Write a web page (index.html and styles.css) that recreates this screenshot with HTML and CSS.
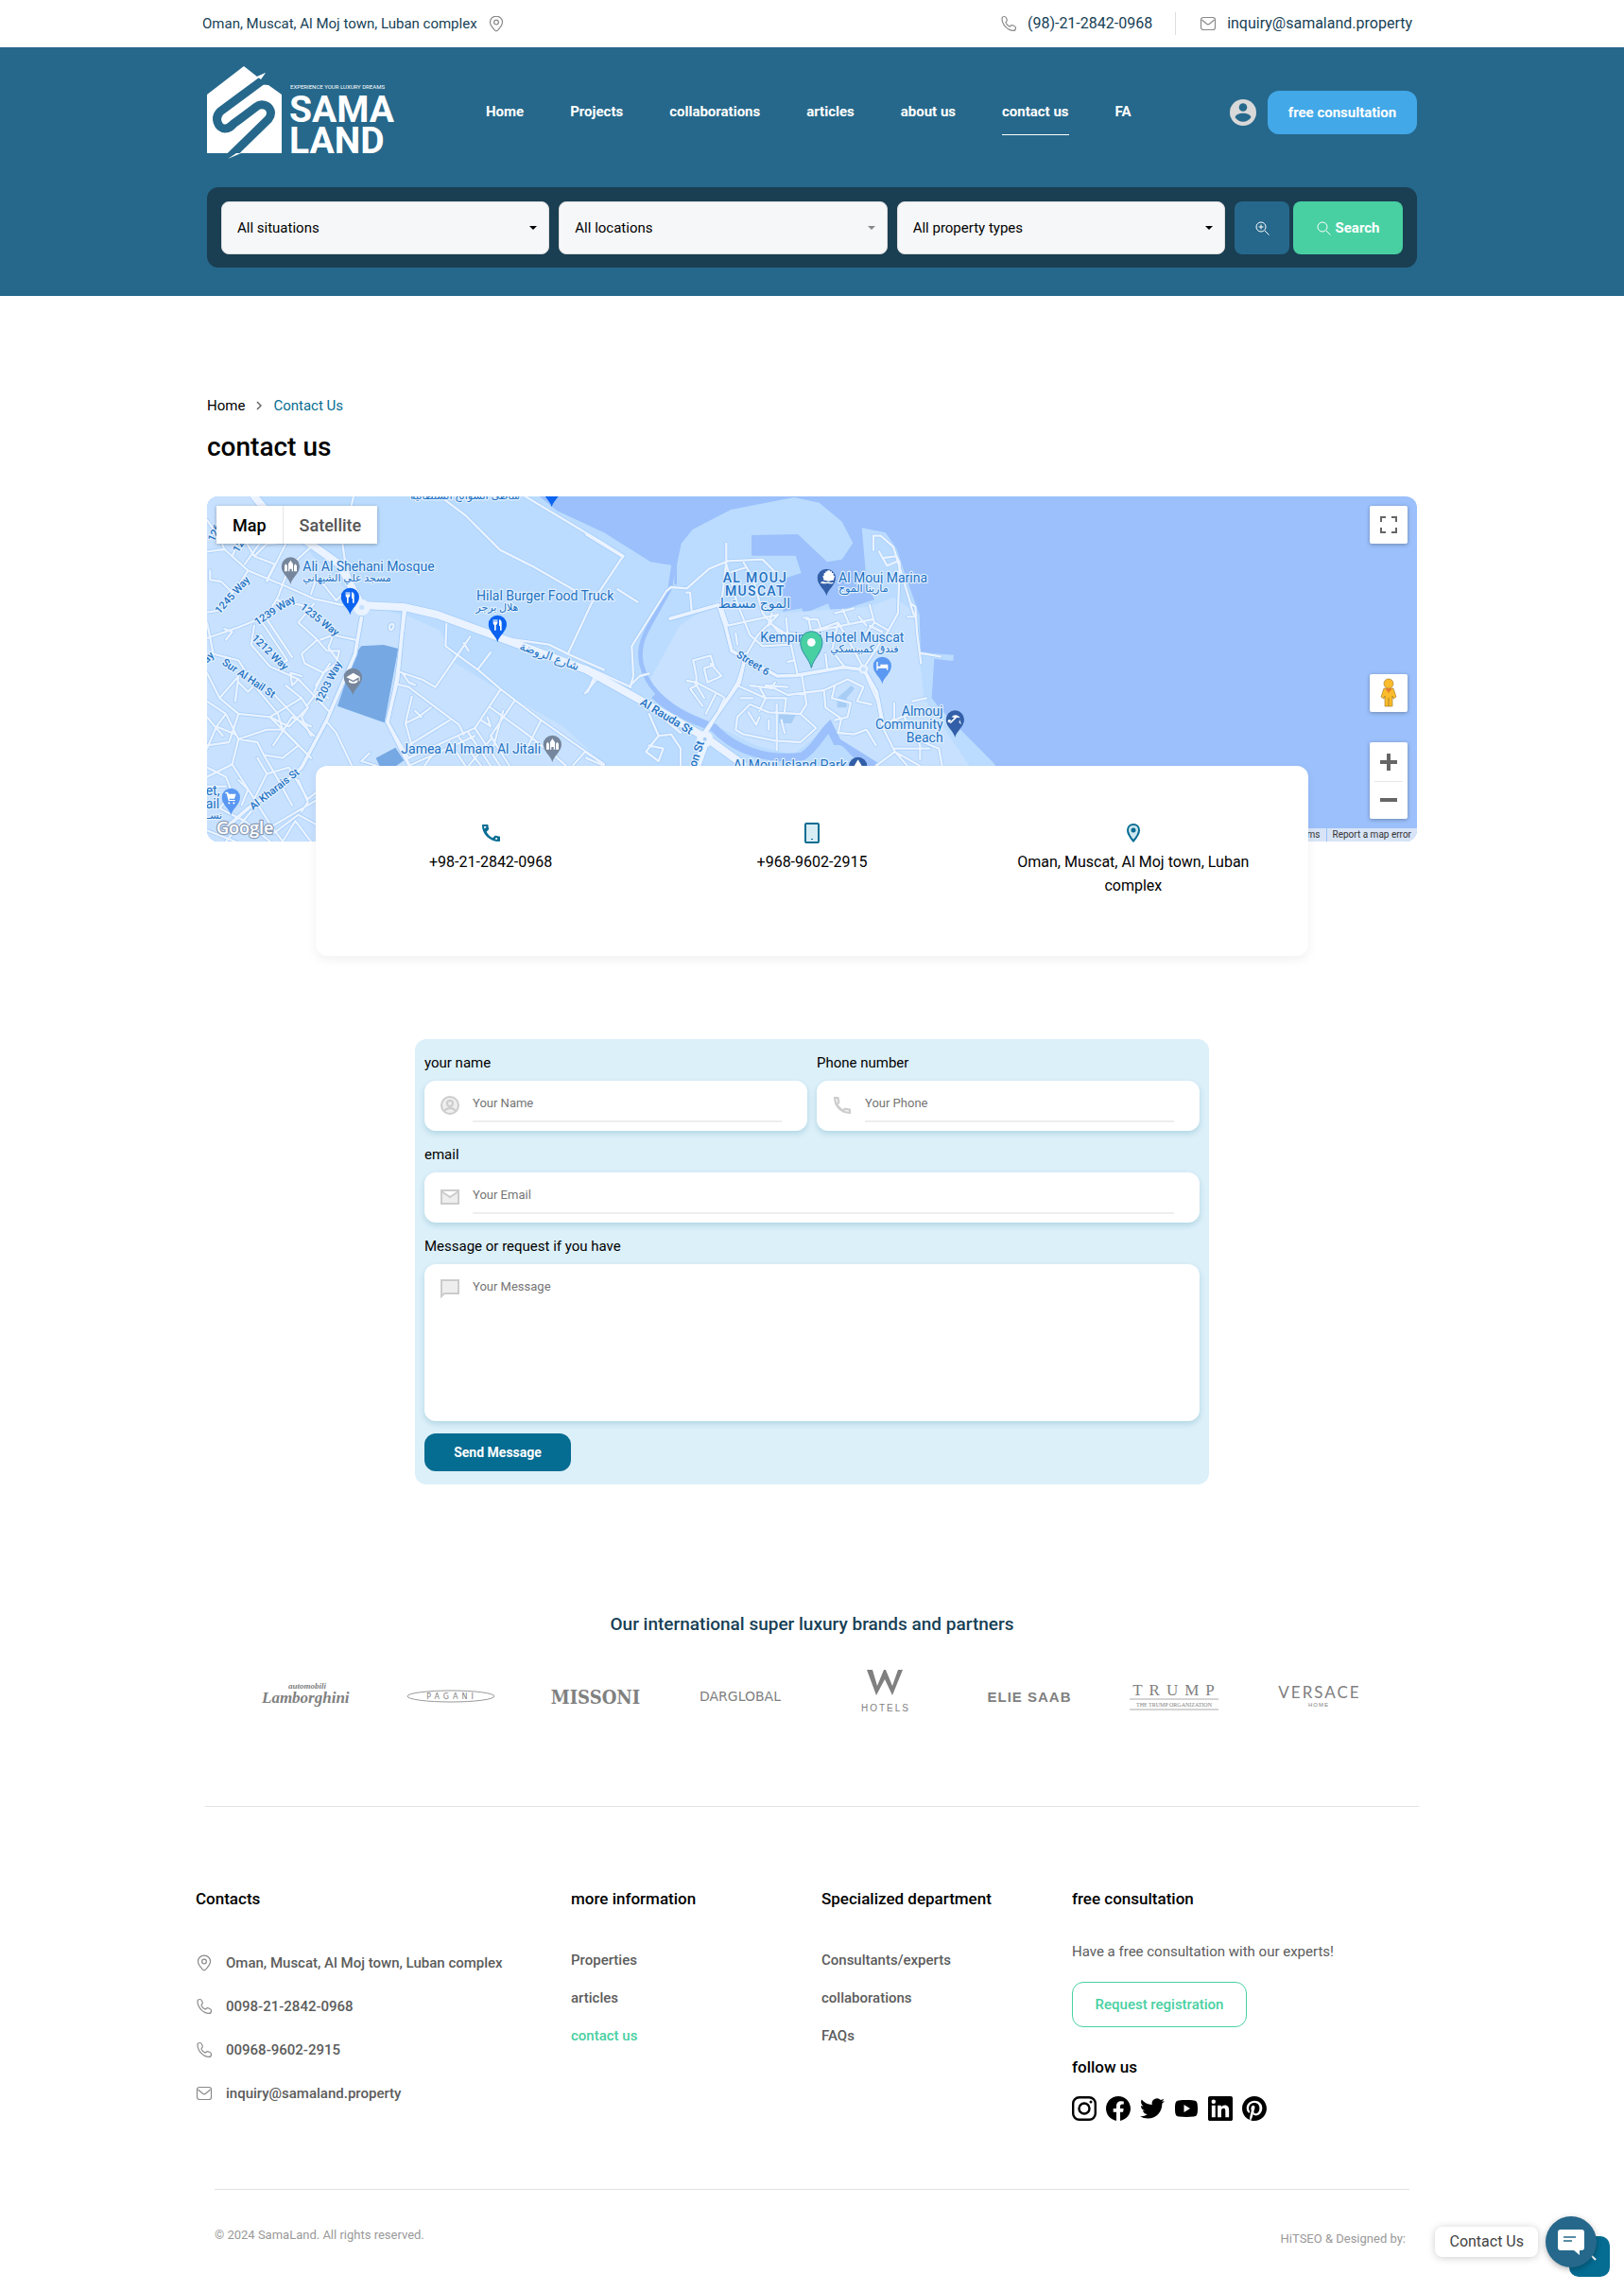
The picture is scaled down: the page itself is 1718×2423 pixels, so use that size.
FILE: index.html
```html
<!DOCTYPE html>
<html lang="en">
<head>
    <meta charset="UTF-8">
    <meta name="viewport" content="width=device-width, initial-scale=1.0">
    <title>Contact Us - SamaLand</title>
    <link rel="stylesheet" href="styles.css">
</head>
<body>
    <!-- shared icons -->
    <svg class="sprite" aria-hidden="true">
        <symbol id="i-pin" viewBox="0 0 18 18"><path d="M9 1.2c-3.800 0-6.500 2.800-6.500 6.300 0 3.800 3.600 6.800 5.200 8.700.7.800 1.900.8 2.600 0 1.600-1.900 5.200-4.900 5.200-8.700C15.500 4 12.800 1.200 9 1.200z"/><circle cx="9" cy="7.600" r="2.400"/></symbol>
        <symbol id="i-phone" viewBox="0 0 18 18"><path d="M2 3.500C2 2.300 3.300 1.500 4.600 1.500c1 0 1.500.6 1.900 1.600l.7 1.700c.3.900 0 1.600-.7 2.200-.6.500-.6.900-.3 1.500.8 1.400 1.900 2.500 3.300 3.300.6.300 1 .3 1.500-.3.600-.7 1.300-1 2.200-.7l1.700.7c1 .4 1.600.9 1.600 1.900 0 1.500-1 3-2.400 3C8 16.400 2 10 2 3.500z"/></symbol>
        <symbol id="i-mail" viewBox="0 0 18 18"><rect x="1.500" y="2.500" width="15" height="13" rx="2.500"/><path d="M2.500 5l5 4.300c.9.700 2.100.7 3 0l5-4.300"/></symbol>
        <symbol id="m-pin" viewBox="-30 -88 60 90"><path d="M0 0C-4-20-29-34-29-57A29 29 0 1 1 29-57C29-34 4-20 0 0z"/></symbol>
    </svg>

    <div class="topbar">
        <div class="topbar-inner">
            <div class="topbar-item">Oman, Muscat, Al Moj town, Luban complex <svg class="line-icon"><use href="#i-pin"/></svg></div>
            <div class="topbar-right">
                <a class="topbar-item" href="tel:+982128420968"><svg class="line-icon"><use href="#i-phone"/></svg> (98)-21-2842-0968</a>
                <a class="topbar-item with-line" href="mailto:inquiry@samaland.property"><svg class="line-icon"><use href="#i-mail"/></svg> inquiry@samaland.property</a>
            </div>
        </div>
    </div>

    <header class="header">
        <div class="container">
            <div class="navbar">
                <a class="logo" href="#" aria-label="Sama Land">
                    <svg width="202" height="98" viewBox="0 0 202 98">
                        <path fill="#fff" d="M0 30L39 0l14 11 9-4-9 12 12 1 14 10v62H33l-11 6 4-6H0z"/>
                        <path fill="none" stroke="#26688b" stroke-width="9" d="M68 8L14 48C7 55 12 66 19 66c4 0 6-2 9-5l24-18c4-3 7-3 11-1 5 3 6 9 2 14L22 98"/>
                        <path fill="#fff" d="M31 92l-9 6 14-6zM53 11l9-4-5 7z"/>
                        <text x="88" y="24" class="logo-tag">EXPERIENCE YOUR LUXURY DREAMS</text>
                        <text x="87" y="59" class="logo-name">SAMA</text>
                        <text x="87" y="92" class="logo-name">LAND</text>
                    </svg>
                </a>
                <nav class="menu">
                    <a href="#">Home</a>
                    <a href="#">Projects</a>
                    <a href="#">collaborations</a>
                    <a href="#">articles</a>
                    <a href="#">about us</a>
                    <a href="#" class="active">contact us</a>
                    <a href="#">FA</a>
                </nav>
                <div class="nav-actions">
                    <a href="#" aria-label="Account">
                        <svg width="28" height="28" viewBox="0 0 28 28"><circle cx="14" cy="14" r="14" fill="#d9d9d9"/><circle cx="14" cy="8.500" r="4.300" fill="#26688b"/><path d="M5.500 19c1-3 5-4.300 8.500-4.300s7.500 1.300 8.500 4.300c-2 3-5 4.800-8.500 4.800S7.500 22 5.500 19z" fill="#26688b"/></svg>
                    </a>
                    <button class="btn-consult" type="button">free consultation</button>
                </div>
            </div>

            <form class="search">
                <div class="select"><select aria-label="Situation"><option>All situations</option></select></div>
                <div class="select muted"><select aria-label="Location"><option>All locations</option></select></div>
                <div class="select"><select aria-label="Property type"><option>All property types</option></select></div>
                <div class="search-buttons">
                    <button class="btn-zoom" type="button" aria-label="Advanced search">
                        <svg width="15" height="15" viewBox="0 0 15 15" fill="none" stroke="#fff"><circle cx="6" cy="6" r="5"/><path d="M10 10l4.500 4.500M3.500 6h5M6 3.500v5"/></svg>
                    </button>
                    <button class="btn-search" type="submit">
                        <svg width="15" height="15" viewBox="0 0 15 15" fill="none" stroke="#fff"><circle cx="6" cy="6" r="5"/><path d="M10 10l4.500 4.500"/></svg>
                        Search
                    </button>
                </div>
            </form>
        </div>
    </header>

    <main class="container">
        <div class="breadcrumb">
            <a href="#">Home</a>
            <svg width="6" height="10" viewBox="0 0 6 10" fill="none" stroke="#666" stroke-width="1.500"><path d="M1 1l4 4-4 4"/></svg>
            <a href="#" class="current">Contact Us</a>
        </div>
        <h1>contact us</h1>

        <div class="map">
            <svg class="map-canvas" viewBox="0 0 3840 1095" preserveAspectRatio="xMidYMid slice">
                <defs>
                    <g id="minor">
                        <!-- west blocks -->
                        <path d="M0 175L55 168L130 235L250 285L340 325L430 345M130 235L95 290L60 330L50 360L0 368M0 450L100 415L150 395L185 385L225 320L260 225L330 160"/>
                        <path d="M10 235V265L45 270L80 305M60 60L110 120L150 190L215 215M110 120L80 190M150 190L190 150L265 145M190 270L250 150M0 75L40 130L55 168M120 215L180 130M215 215L190 265"/>
                        <path d="M0 400L20 500L100 520L150 600L225 690L240 740L330 830M150 410L140 470L200 540L290 580L385 680M55 420L80 430L60 455M175 400L255 520L230 530L170 440M190 390L270 510"/>
                        <path d="M225 330L300 345L370 400L400 440L470 455M290 400L340 340M290 400L350 455L300 500L310 530L370 560L340 620M350 455L380 490L420 490L410 530L370 560M360 455L400 440M400 440L385 480L430 540M330 310L350 250M370 280L410 330L430 310"/>
                        <path d="M0 560L40 640L100 690L200 700L300 640L320 670L260 730L200 700M0 650L60 690L30 730L0 800M60 690L100 770L80 850L0 890M100 770L190 740L240 740L290 790L240 830L180 820L160 780L100 770M30 730L90 755M40 640L100 570L90 650M0 700L50 760"/>
                        <path d="M200 615L300 720L340 760M300 640L250 600M240 740L200 700M160 830L190 880L150 960M80 850L150 960L200 1040L240 1095M190 880L260 860L320 960L345 940M100 690L70 780L0 790M210 790L270 700L330 730M180 820L215 880L270 980"/>
                        <path d="M0 860L60 890L80 940L40 990L120 1030L200 1095M0 920L60 920M100 900L130 930L110 980M200 1050L345 965M210 1070L290 1010L345 1040M240 1095L280 1030L330 1095M0 1060L90 1095M60 1095L140 1000M300 1000L320 970L290 900"/>
                        <path d="M290 580L270 600L265 560L300 570M345 600L390 530M320 670L300 700L330 760M385 640L350 620L320 660M100 590L130 620L150 600"/>
                        <!-- centre -->
                        <path d="M430 150L440 220L475 310M465 0L430 150M585 405C575 410 578 425 586 424C595 415 595 402 585 405M630 365L600 580L575 720L640 830M760 405L757 475L860 550L930 610L1060 710L1260 850"/>
                        <path d="M835 445L790 510L725 605L680 580L605 555M815 465L830 490M900 495L860 548M600 595L640 605L800 725L815 755M650 635L630 720L650 790M630 720L670 700L710 670M660 680L680 700M620 560L640 590L660 598"/>
                        <path d="M640 790L770 710M640 830L850 735L930 615M690 855L740 785M770 780L820 855M800 765L870 855M830 750L900 855M850 735L930 855M900 670L1010 750L1100 820L1140 855M975 650L900 760L960 855M1060 710L1020 790M905 765L830 855M870 710L900 730L890 700M940 680L910 790M640 855L850 760"/>
                        <path d="M380 715L410 750L460 855M540 855L490 840L515 815M740 0L820 60L930 170L1030 220L1170 300L1130 330M1010 0L1260 150L1320 190L1220 340L1145 500M1240 575L1200 625M945 450L1085 470L1145 500L1260 550"/>
                        <path d="M1203 540L1345 605M1203 830L1260 855M1260 850L1200 810L1160 855M1303 295L1367 335"/>
                        <!-- marina -->
                        <g transform="translate(1203 0)">
                            <path d="M140 605L150 570L145 475L255 300L270 288L320 292L390 230L450 205L560 200L600 240M445 150V205L430 340M318 305H330L335 360M430 350L450 410L610 375L545 440L510 500L480 590L385 745M480 470L475 435M445 215L480 340L520 440L560 475L650 470L670 560"/>
                            <path d="M500 210L530 260L560 370L610 430L690 440M580 400L640 440L635 385M590 370L580 410M460 240L510 225M690 385H705L715 430L800 400L780 490L820 540M700 430L745 420L735 390L700 390M715 430L910 390M790 370L850 355M815 360L835 405M865 380L890 410M900 345L915 400L960 425L990 370L995 210L985 190M915 400L870 460M760 500L765 545M640 525L660 520M800 400L840 470L880 545"/>
                            <path d="M912 170V125H935L975 160L1030 340L1045 350L1050 430L1063 530M930 175L955 220L990 205M945 195L980 190M1020 382H1045M1065 498L1125 508M960 425L910 500L880 545M940 430L900 410M1030 345L1040 375"/>
                            <path d="M880 550L925 650L940 730L980 810L1060 855M980 810L920 855M980 810L1020 855M940 730L1000 700L1070 680M978 655V705L950 725M1035 650L1080 640M1010 700L1060 790L1060 835M1070 780L1120 800L1130 855M980 800L1090 800"/>
                            <path d="M685 570L700 660L680 690L730 735L680 780L600 775L500 755L475 740L480 700L520 660L580 685L680 690M520 600L600 610L640 630L755 615L830 580L880 605L860 650L905 660M550 605L570 640L550 680M480 600L570 640L635 640L630 685M755 615L760 670L810 705L800 750L850 755L890 740L920 790M605 660V805M570 600L640 605M600 590L585 610M840 655L830 700L790 710M515 685L540 725L550 700M620 710L630 750M580 710V740M840 655L780 640L790 600M490 640L530 640"/>
                            <path d="M320 585L350 590L435 635M340 520L395 505L405 535L375 545L385 590L430 570L395 530M340 520L350 570L350 600L330 610L370 665M410 630L380 690M440 640L420 680M345 590L375 640M200 690L230 760L270 755L300 800L300 855M230 760L190 810L230 840L245 800L200 790M240 700L300 750M140 600L170 570L200 562M25 575L5 620"/>
                        </g>
                    </g>
                    <g id="mid">
                        <path d="M490 385L470 500L380 710L300 860L240 915L130 990L50 1060M625 365L605 580L572 715L640 850"/>
                        <path d="M1623 345L1645 410L1665 490L1810 570L1870 568L2020 542L2085 550L2125 620L2145 720M1710 500L1690 590L1578 750M1205 120L1320 190M1470 388L1620 345"/>
                    </g>
                    <g id="major"><path d="M150 0L200 60L420 215L490 345L630 352L730 375L920 445L1203 550L1470 700L1590 770L1700 850M1585 770L1555 855"/></g>
                </defs>
                <rect width="3840" height="1095" fill="#9bc0fb"/>
                <path fill="#bbdcff" d="M0 0H1055L1110 45L1260 115L1408 208L1483 220V280H1491V218L1505 150L1541 105L1663 42L1863 3L1943 20L2015 80L2050 148L2015 200L1968 208L1875 120L1728 123V188H1868L1886 243L1828 262V365L1888 355L1893 372L1971 340L1983 370L2118 328L2093 270L2078 100L2153 115L2188 165L2223 270L2261 375L2265 495L2370 503L2368 522L2308 515L2300 640L2323 670L2500 850L2560 1095H0z"/>
                <path fill="#c7e1ff" d="M0 0H150L490 345L640 380L740 425L790 530L920 610L1130 730L1260 850V1095H0zM1500 410L1620 330L1750 340L1830 370L2100 350L2180 320L2250 370L2265 540L2275 640L2420 855H2120L1960 740L1860 820L1740 790L1440 640L1400 590z"/>
                <path class="water" stroke-width="14" d="M1481 215L1470 290L1440 345C1400 420 1365 460 1378 530C1395 600 1440 650 1550 710"/>
                <path class="water" stroke-width="26" d="M1420 630C1450 660 1500 690 1560 715L1610 735C1670 800 1770 840 1890 825C1930 800 1945 760 1975 730L2000 780L2120 855"/>
                <path fill="#bbdcff" d="M1940 855C1950 800 1990 775 2020 795L2075 855z"/>
                <path fill="#76a8e3" d="M490 475L560 471L607 483L563 718L414 665L470 500zM536 830L598 797L625 838L600 855H548z"/>
                <path fill="#a8cdf5" d="M2000 640L2045 600L2055 610L2030 640V670H2000zM1815 690H1870L1855 720H1815z"/>
                <use href="#minor" class="road-case minor"/>
                <use href="#mid" class="road-case mid"/>
                <use href="#major" class="road-case major"/>
                <use href="#minor" class="road minor"/>
                <use href="#mid" class="road mid"/>
                <use href="#major" class="road major"/>
                <circle cx="491" cy="352" r="26" fill="#eaf3ff"/><circle cx="491" cy="352" r="8" fill="#c7e1ff"/>
                <circle cx="1580" cy="770" r="26" fill="#eaf3ff"/><circle cx="1580" cy="770" r="6" fill="#a8cdf5"/>
                <circle cx="2083" cy="548" r="11" fill="#c7e1ff" stroke="#eaf3ff" stroke-width="7"/>

                <g class="street">
                    <text transform="translate(40 374) rotate(-48)">1245 Way</text>
                    <text transform="translate(160 410) rotate(-33)">1239 Way</text>
                    <text transform="translate(294 355) rotate(38)">1235 Way</text>
                    <text transform="translate(140 452) rotate(44)">1212 Way</text>
                    <text transform="translate(362 660) rotate(-63)">1203 Way</text>
                    <text transform="translate(46 532) rotate(34)">Sur Al Hail St</text>
                    <text transform="translate(146 996) rotate(-38)">Al Kharais St</text>
                    <text transform="translate(22 145) rotate(-65)">126</text>
                    <text transform="translate(100 180) rotate(-60)">12</text>
                    <text transform="translate(0 530) rotate(-45)">ay</text>
                    <text transform="translate(1678 508) rotate(32)">Street 6</text>
                    <text class="big" transform="translate(1372 660) rotate(31)">Al Rauda St</text>
                    <text class="big" transform="translate(1552 860) rotate(-72)">on St</text>
                    <text class="big" transform="translate(990 485) rotate(20)">شارع الروضة</text>
                </g>
                <g class="place">
                    <text x="304" y="237">Ali Al Shehani Mosque</text>
                    <text x="304" y="269" class="ar">مسجد علي الشيهاني</text>
                    <text x="855" y="331">Hilal Burger Food Truck</text>
                    <text x="853" y="364" class="ar">هلال برجر</text>
                    <text x="645" y="8" class="ar">شاطئ السوالح السلطانية</text>
                    <text x="616" y="816">Jamea Al Imam Al Jitali</text>
                    <text x="-4" y="948">et,</text>
                    <text x="-4" y="990">ail</text>
                    <text x="0" y="1022" class="ar">نسـ</text>
                    <text x="2004" y="273">Al Mouj Marina</text>
                    <text x="2004" y="304" class="ar">مارينا الموج</text>
                    <text x="1756" y="462">Kempinski Hotel Muscat</text>
                    <text x="1978" y="495" class="ar">فندق كمبينسكي</text>
                    <text x="2336" y="697" text-anchor="end">Almouj</text>
                    <text x="2336" y="739" text-anchor="end">Community</text>
                    <text x="2336" y="781" text-anchor="end">Beach</text>
                    <text x="1670" y="868">Al Mouj Island Park</text>
                    <g class="district" text-anchor="middle">
                        <text x="1740" y="273" class="tracked">AL MOUJ</text>
                        <text x="1740" y="315" class="tracked">MUSCAT</text>
                        <text x="1737" y="355">الموج مسقط</text>
                    </g>
                </g>

                <g fill="#76869c">
                    <use href="#m-pin" x="235" y="191" width="60" height="90"/>
                    <use href="#m-pin" x="433" y="543" width="60" height="90"/>
                    <use href="#m-pin" x="1066" y="756" width="60" height="90"/>
                </g>
                <g fill="#0b63f0">
                    <use href="#m-pin" x="424" y="288" width="60" height="90"/>
                    <use href="#m-pin" x="892" y="375" width="60" height="90"/>
                    <use href="#m-pin" x="1064" y="-54" width="60" height="90"/>
                </g>
                <g fill="#335fa8">
                    <use href="#m-pin" x="1936" y="228" width="60" height="90"/>
                    <use href="#m-pin" x="2344" y="677" width="60" height="90"/>
                    <use href="#m-pin" x="2036" y="825" width="60" height="90"/>
                </g>
                <g fill="#5a98f2">
                    <use href="#m-pin" x="46" y="924" width="60" height="90"/>
                    <use href="#m-pin" x="2113" y="507" width="60" height="90"/>
                </g>
                <g fill="#fff">
                    <path id="mosque" d="M246 238V220l4-6 5 6v18zm12 0v-22c0-6 7-8 7-14 0 6 8 8 8 14v22h-4v-8h-7v8zm18 0V220l4-6 5 6v18z"/>
                    <use href="#mosque" x="831" y="565"/>
                    <path d="M442 574l22-14 21 12v14h-3v-12l-18 10zm8 8l14 7 14-7v7c-8 6-20 6-28 0z"/>
                    <path id="food" d="M440 304h3v8h2v-8h4v8h2v-8h3v10c0 4-3 6-5 7v17h-5v-17c-2-1-4-3-4-7zM459 304c5 0 8 4 8 10v24h-5v-14h-3z"/>
                    <use href="#food" x="468" y="87"/>
                    <path d="M1958 243h5v-5h6v-3h8v3h6v5h5v8l4 2-4 14c-5-3-7 2-15 2s-10-5-15-2l-4-14 4-2zM1948 272c8-5 10 2 18 0s14 4 20 0l2 3c-8 5-12 0-20 1s-12 2-20-1z"/>
                    <path d="M2356 708a5 5 0 1 0 .1 0zM2363 700c8-9 20-8 27 3l-10-2-20 20-4-3 16-16zM2388 708l6 16-7-6z"/>
                    <path d="M58 938h8l3 6h23l-5 15H70l2 4h17v3H68l-6-23h-4zM70 970a3 3 0 1 0 .1 0zM85 970a3 3 0 1 0 .1 0z"/>
                    <path d="M2125 525h4v14h8v-6h24v18h-4v-6h-28v6h-4z"/>
                    <path d="M2066 835l12 20h-24z"/>
                </g>
                <path d="M1918 544C1912 515 1883 495 1883 463A35 35 0 1 1 1953 463C1953 495 1924 515 1918 544z" fill="#48d0a2" stroke="#2f8fa8" stroke-width="3"/>
                <circle cx="1918" cy="463" r="13" fill="#fff"/>
                <text x="30" y="1070" class="google">Google</text>
            </svg>
            <div class="map-type">
                <button type="button" class="on">Map</button>
                <button type="button">Satellite</button>
            </div>
            <button type="button" class="map-btn fullscreen" aria-label="Fullscreen">
                <svg width="18" height="18" viewBox="0 0 18 18" fill="none" stroke="#666" stroke-width="2"><path d="M1 6V1h5M12 1h5v5M17 12v5h-5M6 17H1v-5"/></svg>
            </button>
            <div class="map-tools">
                <button type="button" class="map-btn" aria-label="Street view">
                    <svg width="20" height="32" viewBox="0 0 20 32"><g fill="#fbbc2c" stroke="#9a7422" stroke-width=".6"><path d="M5 11h10l3 9-3 2-1-3v11H6V19l-1 3-3-2z"/><circle cx="10" cy="6" r="5"/></g><path d="M6 11h8l-4 5z" fill="#e57f2e"/><path d="M10 21v9" stroke="#9a7422" stroke-width=".8"/></svg>
                </button>
                <div class="zoom">
                    <button type="button" aria-label="Zoom in"><svg width="18" height="18" viewBox="0 0 18 18" fill="#666"><path d="M7 0h4v7h7v4h-7v7H7v-7H0V7h7z"/></svg></button>
                    <button type="button" aria-label="Zoom out"><svg width="18" height="18" viewBox="0 0 18 18" fill="#666"><path d="M0 7h18v4H0z"/></svg></button>
                </div>
            </div>
            <div class="map-legal"><a href="#">Terms</a><a href="#">Report a map error</a></div>
        </div>

        <div class="contact-card">
            <div class="contact-cell">
                <svg width="24" height="24" viewBox="0 0 24 24"><path fill="#056c92" fill-rule="evenodd" d="M3 4c0-.6.400-1 1-1h4.500c.6 0 1 .4 1 1 0 1.200.2 2.400.6 3.500.1.400 0 .8-.3 1.100L7.700 10.700c1.400 2.800 3.700 5.100 6.500 6.500l2.200-2.200c.3-.3.700-.3 1-.2 1.100.4 2.300.6 3.600.6.500 0 1 .4 1 1V20c0 .6-.5 1-1 1C11 21 3 13.400 3 4zm2 1c.1.900.3 1.800.6 2.600L6.800 6.400 7.600 5zM16.500 18.300c.8.300 1.700.5 2.600.6v-1.600l-1.300-.2z"/></svg>
                <p>+98-21-2842-0968</p>
            </div>
            <div class="contact-cell">
                <svg width="24" height="24" viewBox="0 0 24 24"><rect x="5" y="2" width="14" height="20" rx="1" fill="#d9edf5" stroke="#056c92" stroke-width="2"/><path stroke="#056c92" stroke-width="1" d="M11 18.500h2"/></svg>
                <p>+968-9602-2915</p>
            </div>
            <div class="contact-cell">
                <svg width="24" height="24" viewBox="0 0 24 24"><path fill="#cde6f0" stroke="#056c92" stroke-width="2" d="M12 3C8.500 3 6 5.600 6 9c0 4.500 6 11.500 6 11.500S18 13.500 18 9c0-3.400-2.500-6-6-6z"/><circle cx="12" cy="9" r="2.500" fill="#056c92"/></svg>
                <p>Oman, Muscat, Al Moj town, Luban complex</p>
            </div>
        </div>

        <form class="contact-form">
            <div class="field">
                <label for="name">your name</label>
                <div class="box">
                    <svg width="24" height="24" viewBox="0 0 24 24" fill="#eee" stroke="#ccc" stroke-width="2"><circle cx="12" cy="12" r="9"/><circle cx="12" cy="10" r="3"/><path d="M6 18c3-4 9-4 12 0"/></svg>
                    <input id="name" type="text" placeholder="Your Name">
                </div>
            </div>
            <div class="field">
                <label for="phone">Phone number</label>
                <div class="box">
                    <svg width="24" height="24" viewBox="0 0 24 24" fill="#eee" stroke="#ccc" stroke-width="2"><path d="M4 4h3.500l1 5-2.200 2C8 14 10 16 13 17.600l2-2.100 5 1V20C11 20 4 13 4 4z"/></svg>
                    <input id="phone" type="tel" placeholder="Your Phone">
                </div>
            </div>
            <div class="field wide">
                <label for="email">email</label>
                <div class="box">
                    <svg width="24" height="24" viewBox="0 0 24 24" fill="#eee" stroke="#ccc" stroke-width="2"><path d="M3 5h18v14H3zM3 6l9 6 9-6"/></svg>
                    <input id="email" type="email" placeholder="Your Email">
                </div>
            </div>
            <div class="field wide">
                <label for="message">Message or request if you have</label>
                <div class="box tall">
                    <svg width="24" height="24" viewBox="0 0 24 24" fill="#eee" stroke="#ccc" stroke-width="2"><path d="M3 3h18v14H6l-3 3z"/></svg>
                    <textarea id="message" placeholder="Your Message"></textarea>
                </div>
            </div>
            <button class="btn-send" type="submit">Send Message</button>
        </form>
    </main>

    <section class="partners">
        <h2>Our international super luxury brands and partners</h2>
        <div class="brands">
            <svg width="94" height="60"><g class="script"><text x="28" y="22" font-size="9">automobili</text><text x="0" y="37" font-size="17">Lamborghini</text></g></svg>
            <svg width="94" height="60"><ellipse cx="47" cy="30" rx="46" ry="6" fill="none" stroke="#999"/><text x="48" y="33" text-anchor="middle" font-size="8" class="wide-sans pagani">PAGANI</text></svg>
            <svg width="94" height="60"><text x="47" y="38" text-anchor="middle" font-size="20" class="slab">MISSONI</text></svg>
            <svg width="94" height="60"><text x="47" y="35" text-anchor="middle" font-size="14" class="wide-sans">DARGLOBAL</text></svg>
            <svg width="94" height="60"><path d="M28 2h6l5 17 7-17h2l7 17 6-17h5L55 29 47 12 38 29z" fill="#808080"/><text x="48" y="46" text-anchor="middle" font-size="10" class="sans tracked">HOTELS</text></svg>
            <svg width="94" height="60"><text x="47" y="36" text-anchor="middle" font-size="15" class="sans semi spaced">ELIE SAAB</text></svg>
            <svg width="94" height="60"><text x="50" y="29" text-anchor="middle" font-size="17" class="serif trump">TRUMP</text><path d="M0 33h94M0 44h94" stroke="#aaa"/><text x="47" y="41" text-anchor="middle" font-size="6" class="serif">THE TRUMP ORGANIZATION</text></svg>
            <svg width="94" height="60"><text x="48" y="32" text-anchor="middle" font-size="17" class="optima tracked">VERSACE</text><text x="47" y="41" text-anchor="middle" font-size="6" class="sans spaced">HOME</text></svg>
        </div>
    </section>

    <footer class="footer">
        <div class="footer-cols">
            <div class="col-contacts">
                <h3>Contacts</h3>
                <ul class="contact-list">
                    <li><svg class="line-icon"><use href="#i-pin"/></svg>Oman, Muscat, Al Moj town, Luban complex</li>
                    <li><svg class="line-icon"><use href="#i-phone"/></svg>0098-21-2842-0968</li>
                    <li><svg class="line-icon"><use href="#i-phone"/></svg>00968-9602-2915</li>
                    <li><svg class="line-icon"><use href="#i-mail"/></svg>inquiry@samaland.property</li>
                </ul>
            </div>
            <div>
                <h3>more information</h3>
                <ul class="link-list">
                    <li><a href="#">Properties</a></li>
                    <li><a href="#">articles</a></li>
                    <li><a href="#" class="active">contact us</a></li>
                </ul>
            </div>
            <div>
                <h3>Specialized department</h3>
                <ul class="link-list">
                    <li><a href="#">Consultants/experts</a></li>
                    <li><a href="#">collaborations</a></li>
                    <li><a href="#">FAQs</a></li>
                </ul>
            </div>
            <div>
                <h3>free consultation</h3>
                <p class="consult-text">Have a free consultation with our experts!</p>
                <button class="btn-request" type="button">Request registration</button>
                <h3 class="follow">follow us</h3>
                <div class="social">
                    <a href="#" aria-label="Instagram"><svg viewBox="0 0 26 26" fill="none" stroke="#000" stroke-width="2.400"><rect x="1.200" y="1.200" width="23.600" height="23.600" rx="6.500"/><circle cx="13" cy="13" r="5.500"/><circle cx="20" cy="6" r="1.500" fill="#000" stroke="none"/></svg></a>
                    <a href="#" aria-label="Facebook"><svg viewBox="0 0 24 24"><path d="M24 12.070C24 5.440 18.630.07 12 .07S0 5.440 0 12.070c0 5.990 4.390 10.950 10.130 11.850v-8.380H7.080v-3.470h3.050V9.430c0-3.010 1.790-4.670 4.530-4.670 1.310 0 2.690.24 2.690.24v2.950h-1.510c-1.490 0-1.960.93-1.960 1.870v2.250h3.330l-.53 3.470h-2.800v8.380C19.610 23.020 24 18.060 24 12.070z"/></svg></a>
                    <a href="#" aria-label="Twitter"><svg viewBox="0 0 24 24"><path d="M23.950 4.570a10 10 0 0 1-2.820.77 4.960 4.960 0 0 0 2.160-2.720c-.95.550-2 .95-3.130 1.180a4.920 4.920 0 0 0-8.380 4.480C7.690 8.090 4.070 6.130 1.640 3.160a4.820 4.820 0 0 0-.67 2.480c0 1.710.87 3.210 2.190 4.100a4.900 4.900 0 0 1-2.230-.62v.06a4.920 4.920 0 0 0 3.950 4.830 5 5 0 0 1-2.210.08 4.940 4.940 0 0 0 4.600 3.420A9.870 9.870 0 0 1 0 19.540a13.990 13.990 0 0 0 7.550 2.210c9.050 0 14-7.500 14-13.980 0-.21 0-.42-.02-.63a9.940 9.940 0 0 0 2.460-2.550z"/></svg></a>
                    <a href="#" aria-label="YouTube"><svg viewBox="0 0 26 26"><path fill-rule="evenodd" d="M5 4.500c5-.6 11-.6 16 0 3 .3 4 2 4 8.500s-1 8.200-4 8.500c-5 .6-11 .6-16 0-3-.3-4-2-4-8.500s1-8.200 4-8.500zM10.500 9v8l6.500-4z"/></svg></a>
                    <a href="#" aria-label="LinkedIn"><svg viewBox="0 0 24 24"><path d="M20.450 20.450h-3.560v-5.570c0-1.330-.03-3.040-1.850-3.040-1.850 0-2.140 1.450-2.140 2.940v5.670H9.350V9h3.410v1.560h.05c.48-.9 1.640-1.850 3.370-1.850 3.600 0 4.270 2.370 4.270 5.460v6.280zM5.340 7.430a2.060 2.060 0 1 1 0-4.120 2.060 2.060 0 0 1 0 4.120zM7.120 20.450H3.560V9h3.560v11.450zM22.220 0H1.770C.79 0 0 .77 0 1.730v20.540C0 23.230.79 24 1.770 24h20.450c.98 0 1.780-.77 1.780-1.730V1.730C24 .77 23.200 0 22.220 0z"/></svg></a>
                    <a href="#" aria-label="Pinterest"><svg viewBox="0 0 24 24"><path d="M12.020 0C5.400 0 .03 5.370.03 11.990c0 5.080 3.160 9.420 7.620 11.160-.1-.95-.2-2.400.04-3.440.22-.94 1.410-5.960 1.410-5.960s-.36-.72-.36-1.780c0-1.670.97-2.910 2.170-2.910 1.020 0 1.520.77 1.520 1.690 0 1.030-.65 2.570-1 4-.28 1.190.6 2.170 1.780 2.170 2.130 0 3.770-2.250 3.770-5.490 0-2.860-2.060-4.870-5.010-4.870-3.410 0-5.410 2.560-5.410 5.200 0 1.030.39 2.140.89 2.740.1.120.11.230.08.350l-.33 1.360c-.05.220-.17.270-.4.160-1.500-.69-2.440-2.880-2.440-4.650 0-3.780 2.750-7.250 7.920-7.250 4.160 0 7.400 2.970 7.400 6.920 0 4.140-2.610 7.460-6.230 7.460-1.210 0-2.360-.63-2.760-1.380l-.75 2.850c-.27 1.040-1 2.350-1.500 3.150 1.120.35 2.310.53 3.550.53 6.610 0 11.980-5.370 11.980-11.980C23.990 5.370 18.630 0 12.020 0z"/></svg></a>
                </div>
            </div>
        </div>
        <div class="footer-bottom">
            <span>© 2024 SamaLand. All rights reserved.</span>
            <span class="credit">HiTSEO &amp; Designed by:</span>
        </div>
    </footer>

    <button class="to-top" type="button" aria-label="Back to top">
        <svg width="14" height="8" viewBox="0 0 14 8" fill="none" stroke="#fff" stroke-width="2"><path d="M1 7l6-6 6 6"/></svg>
    </button>
    <div class="chat">
        <span class="chat-label">Contact Us</span>
        <button type="button" aria-label="Open chat">
            <svg width="28" height="28" viewBox="0 0 28 28"><path fill="#fff" d="M3 1h22a3 3 0 0 1 3 3v16a3 3 0 0 1-3 3h-2v5l-6-5H3a3 3 0 0 1-3-3V4a3 3 0 0 1 3-3z"/><path stroke="#26688b" stroke-width="1.500" d="M6 9h13M6 13h9"/></svg>
        </button>
    </div>
</body>
</html>
```
FILE: styles.css
```css
* {
    box-sizing: border-box;
}
body {
    margin: 0;
    position: relative;
    background: #fff;
    color: #000;
    font-family: Roboto, 'Noto Sans', sans-serif;
    font-size: 15px;
    line-height: 24px;
}
a {
    color: inherit;
    text-decoration: none;
}
button, input, select, textarea {
    font-family: inherit;
    font-size: 15px;
}
button {
    border: none;
    padding: 0;
    cursor: pointer;
}
svg {
    display: block;
    flex: none;
}
h1, h2, h3, p, ul {
    margin: 0;
    padding: 0;
    font-weight: 500;
}
ul {
    list-style: none;
}
.sprite {
    position: absolute;
    width: 0;
    height: 0;
}
.container {
    width: 100%;
    max-width: 1280px;
    margin: 0 auto;
}
.line-icon {
    width: 18px;
    height: 18px;
    fill: none;
    stroke: #8a8a8a;
    stroke-width: 1.2px;
}

/* top bar */
.topbar-inner {
    display: flex;
    justify-content: space-between;
    align-items: center;
    max-width: 1290px;
    height: 50px;
    margin: 0 auto;
    color: #173f56;
}
.topbar-item {
    display: flex;
    align-items: center;
    gap: 11px;
}
.topbar-right {
    display: flex;
    align-items: center;
    gap: 24px;
    font-size: 16px;
}
.with-line {
    border-left: 1px solid #ddd;
    padding-left: 25px;
    padding-right: 10px;
}

/* header */
.header {
    background: #26688b;
    padding: 20px 0 30px;
}
.navbar {
    display: flex;
    align-items: center;
    height: 98px;
}
.logo {
    width: 202px;
}
.logo svg {
    overflow: visible;
}
.logo-tag {
    font-size: 6px;
    fill: #fff;
}
.logo-name {
    font-weight: 700;
    font-size: 39px;
    fill: #fff;
}
.menu {
    display: flex;
    gap: 49px;
    margin-left: 93px;
    color: #fff;
    font-weight: 700;
}
.menu a {
    padding: 10px 0 12px;
    border-bottom: 1px solid transparent;
}
.menu .active {
    border-color: #fff;
}
.nav-actions {
    display: flex;
    align-items: center;
    gap: 12px;
    margin-left: auto;
}
.btn-consult {
    width: 158px;
    height: 46px;
    border-radius: 12px;
    background: #42a8e8;
    color: #fff;
    font-weight: 700;
}
.search {
    display: grid;
    grid-template-columns: 1fr 1fr 1fr auto;
    gap: 10px;
    margin-top: 30px;
    padding: 15px 15px 14px;
    border-radius: 12px;
    background: #1a3e52;
}
.select {
    position: relative;
}
.select select {
    width: 100%;
    height: 56px;
    padding: 0 16px;
    appearance: none;
    border: 1px solid #ddd;
    border-radius: 8px;
    background: #f6f7f9;
    color: #000;
}
.select::after {
    content: "";
    position: absolute;
    right: 13px;
    top: 26px;
    border: 4px solid transparent;
    border-top-color: #000;
    border-bottom: 0;
}
.select.muted::after {
    border-top-color: #888;
}
.search-buttons {
    display: flex;
    gap: 4px;
}
.btn-zoom, .btn-search {
    display: flex;
    align-items: center;
    justify-content: center;
    gap: 5px;
    height: 56px;
    border-radius: 8px;
    color: #fff;
    font-weight: 700;
}
.btn-zoom {
    width: 58px;
    background: #26688b;
}
.btn-search {
    width: 116px;
    background: #48d0a2;
}

/* page title */
.breadcrumb {
    display: flex;
    align-items: center;
    gap: 12px;
    padding-top: 104px;
}
.breadcrumb .current {
    color: #056c92;
}
h1 {
    margin: 12px 0 32px;
    font-size: 28px;
    line-height: 40px;
}

/* map */
.map {
    position: relative;
    height: 365px;
    border-radius: 12px;
    overflow: hidden;
}
.map-canvas {
    width: 100%;
    height: 100%;
}
.water {
    fill: none;
    stroke: #9bc0fb;
}
.road-case, .road {
    fill: none;
    stroke-linejoin: round;
    stroke-linecap: round;
}
.road-case {
    stroke: #a3cbfa;
}
.road {
    stroke: #eaf3ff;
}
.road-case.minor { stroke-width: 11px; }
.road.minor { stroke-width: 7px; }
.road-case.mid { stroke-width: 16px; }
.road.mid { stroke-width: 11px; }
.road-case.major { stroke-width: 28px; }
.road.major { stroke-width: 24px; }
.place text, .street text, .google {
    paint-order: stroke;
    stroke: #e3f0ff;
    stroke-width: 7px;
    stroke-linejoin: round;
    fill: #2272c3;
    font-family: Roboto, 'DejaVu Sans', sans-serif;
}
.place text {
    font-size: 42px;
}
.place .ar {
    font-size: 33px;
}
.place .district text {
    font-weight: 500;
}
.place .district .tracked {
    letter-spacing: 4px;
}
.street text {
    font-size: 33px;
    font-weight: 500;
}
.street .big {
    font-size: 36px;
}
.map .google {
    font-family: 'Open Sans', sans-serif;
    font-size: 54px;
    font-weight: 600;
    fill: #fff;
    stroke: #8a9bb5;
}
.map-type {
    position: absolute;
    top: 10px;
    left: 10px;
    display: flex;
    box-shadow: 0 1px 4px rgba(0,0,0,0.3);
}
.map-type button {
    height: 40px;
    padding: 0 17px;
    background: #fff;
    color: #565656;
    font-size: 18px;
    font-weight: 500;
}
.map-type .on {
    border-right: 1px solid #e6e6e6;
    color: #000;
}
.map-btn, .zoom {
    display: flex;
    align-items: center;
    justify-content: center;
    width: 40px;
    height: 40px;
    background: #fff;
    border-radius: 2px;
    box-shadow: 0 1px 4px rgba(0,0,0,0.3);
}
.fullscreen {
    position: absolute;
    top: 10px;
    right: 10px;
}
.map-tools {
    position: absolute;
    right: 10px;
    bottom: 24px;
    display: grid;
    gap: 32px;
}
.zoom {
    flex-direction: column;
    height: 81px;
}
.zoom button {
    display: flex;
    align-items: center;
    justify-content: center;
    width: 30px;
    height: 40px;
    background: none;
}
.zoom button + button {
    border-top: 1px solid #e6e6e6;
}
.map-legal {
    position: absolute;
    right: 0;
    bottom: 0;
    display: flex;
    font-size: 10px;
    line-height: 14px;
    color: #333;
}
.map-legal a {
    padding: 0 6px;
    background: #d8e4f6;
}
.map-legal a + a {
    margin-left: 1px;
}

.contact-card {
    position: relative;
    display: grid;
    grid-template-columns: repeat(3, 1fr);
    width: 82%;
    min-height: 201px;
    margin: -80px auto 0;
    padding: 59px 15px;
    border-radius: 12px;
    background: #fff;
    box-shadow: 0 4px 12px rgba(0,0,0,0.06);
}
.contact-cell {
    display: grid;
    justify-items: center;
    align-content: start;
    gap: 6px;
    padding: 0 40px;
    text-align: center;
    font-size: 16px;
    line-height: 25px;
}
.contact-cell p {
    font-weight: 400;
}

/* form */
.contact-form {
    display: grid;
    grid-template-columns: 1fr 1fr;
    gap: 13px 10px;
    max-width: 840px;
    margin: 88px auto 0;
    padding: 13px 10px 14px;
    border-radius: 12px;
    background: #dcf0f9;
}
.wide {
    grid-column: 1 / -1;
}
.field label {
    display: block;
    margin-bottom: 7px;
}
.box {
    display: flex;
    align-items: flex-start;
    gap: 12px;
    height: 53px;
    padding: 0 27px 0 15px;
    border-radius: 12px;
    background: #fff;
    box-shadow: 0 3px 6px rgba(5,108,146,0.2);
}
.box svg {
    margin-top: 14px;
}
.box input, .box textarea {
    flex: 1;
    min-width: 0;
    height: 44px;
    padding: 4px 0 0;
    border: none;
    border-bottom: 2px solid #eee;
    background: none;
    font-size: 13px;
}
.box.tall {
    height: 166px;
}
.box textarea {
    height: 150px;
    padding-top: 16px;
    border: none;
    resize: none;
}
.box ::placeholder {
    color: #757575;
}
.btn-send {
    width: 155px;
    height: 40px;
    border-radius: 12px;
    background: #056c92;
    color: #fff;
    font-weight: 700;
    font-size: 14px;
}

/* partners */
.partners {
    max-width: 1284px;
    margin: 133px auto 0;
    padding: 0 30px 86px;
    border-bottom: 1px solid #e2e2e2;
}
.partners h2 {
    color: #173f56;
    font-size: 19px;
    line-height: 30px;
    text-align: center;
}
.brands {
    display: grid;
    grid-template-columns: repeat(8, 1fr);
    justify-items: center;
    margin-top: 31px;
}
.brands svg {
    overflow: visible;
}
.brands text {
    fill: #808080;
}
.script {
    font-family: 'Liberation Serif', serif;
    font-style: italic;
    font-weight: 700;
}
.wide-sans {
    font-family: 'DejaVu Sans', sans-serif;
}
.slab {
    font-family: 'DejaVu Serif Condensed', 'DejaVu Serif', serif;
    font-weight: 700;
}
.sans {
    font-family: 'Liberation Sans', sans-serif;
}
.semi {
    font-weight: 700;
}
.serif {
    font-family: 'Liberation Serif', serif;
}
.optima {
    font-family: Lato, sans-serif;
}
.spaced {
    letter-spacing: 1px;
}
.tracked {
    letter-spacing: 2px;
}
.pagani {
    letter-spacing: 4px;
}
.trump {
    letter-spacing: 7px;
}

/* footer */
.footer {
    max-width: 1304px;
    margin: 0 auto;
    padding-top: 85px;
}
.footer-cols {
    display: grid;
    grid-template-columns: 397px 265px 265px 1fr;
    color: #5c5c5c;
}
h3 {
    color: #000;
    font-size: 17px;
    line-height: 24px;
}
.contact-list {
    display: grid;
    gap: 22px;
    margin-top: 44px;
}
.contact-list li {
    display: flex;
    align-items: center;
    gap: 14px;
}
.link-list {
    display: grid;
    gap: 16px;
    margin-top: 41px;
}
.link-list .active {
    color: #48d0a2;
}
.consult-text {
    margin-top: 32px;
    font-weight: 400;
}
.btn-request {
    width: 185px;
    height: 48px;
    margin-top: 20px;
    border: 1px solid #48d0a2;
    border-radius: 12px;
    background: #fff;
    color: #48d0a2;
    font-weight: 500;
}
.follow {
    margin-top: 30px;
}
.social {
    display: flex;
    gap: 10px;
    margin-top: 19px;
}
.social svg {
    width: 26px;
    height: 26px;
}
.footer-bottom {
    display: flex;
    justify-content: space-between;
    margin: 72px 20px 0;
    padding: 36px 4px 43px 0;
    border-top: 1px solid #e2e2e2;
    color: #999;
    font-size: 13px;
}
.credit {
    padding-top: 4px;
}

/* floating buttons */
.to-top {
    position: absolute;
    right: 15px;
    bottom: 15px;
    display: flex;
    align-items: center;
    justify-content: center;
    width: 43px;
    height: 43px;
    border-radius: 10px;
    background: #056c92;
}
.chat {
    position: absolute;
    right: 29px;
    bottom: 25px;
    display: flex;
    align-items: center;
    gap: 8px;
}
.chat-label {
    padding: 4px 15px;
    border-radius: 8px;
    background: #fff;
    color: #444;
    font-size: 16px;
    box-shadow: 0 1px 8px rgba(0,0,0,0.2);
}
.chat button {
    display: flex;
    align-items: center;
    justify-content: center;
    width: 54px;
    height: 54px;
    border-radius: 50%;
    background: #26688b;
    box-shadow: 0 2px 6px rgba(0,0,0,0.3);
}
```
